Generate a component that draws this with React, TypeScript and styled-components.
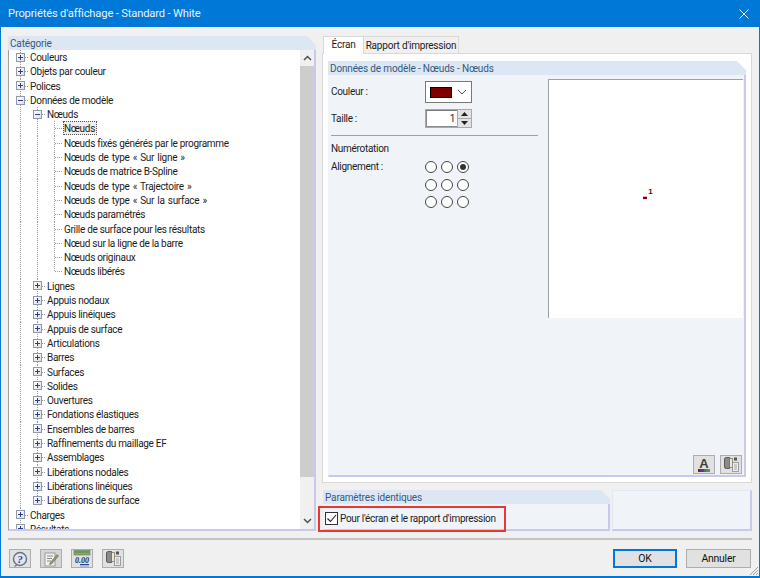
import React from "react";
import styled, { createGlobalStyle, css } from "styled-components";

const Global = createGlobalStyle`
  html, body { margin: 0; padding: 0; background: #f0f0f0; }
  #root { width: 760px; height: 578px; }
  * { box-sizing: border-box; }
`;

const FONT = `Roboto, "Noto Sans", "Liberation Sans", sans-serif`;

const Window = styled.div`
  width: 760px; height: 578px; display: flex; flex-direction: column;
  border: 1px solid #0078d7; border-top: 0; border-bottom-width: 2px;
  background: #f0f0f0; font: 10px ${FONT}; letter-spacing: -0.3px; color: #1c1c1c; overflow: hidden;
`;
const TitleBar = styled.div`
  height: 27px; flex: none; background: #0078d7; color: #e8f2fb; display: flex;
  align-items: center; justify-content: space-between; padding: 0 11px 0 8px; font-size: 11.2px; letter-spacing: -0.17px;
  margin: 0 -1px;
`;
const Main = styled.div`
  height: 504px; flex: none; padding: 9px 7px 0 7px; display: flex; gap: 6px;
`;
const LeftColumn = styled.section`
  width: 308px; display: flex; flex-direction: column;
`;
const PanelHeader = styled.div`
  height: 14px; flex: none; background: #dde6f3; color: #34597f; padding: 1px 2px 0; line-height: 13px; letter-spacing: -0.15px;
  clip-path: polygon(0 0, calc(100% - 9px) 0, 100% 9px, 100% 100%, 0 100%);
`;
const TreeFrame = styled.div`
  height: 481px; display: flex; border-left: 1px solid #a0a0a0; border-right: 2px solid #c9c9f0;
  border-bottom: 2px solid #c9c9f0; background: #fff;
`;
const Tree = styled.div`
  flex: 1; padding-left: 3px; overflow: hidden; min-width: 0;
`;
const Row = styled.div`
  height: 14.3px; display: flex; align-items: stretch; white-space: nowrap;
`;
const dotV = "repeating-linear-gradient(to bottom, #9a9a9a 0 1px, transparent 1px 2px)";
const dotH = "repeating-linear-gradient(to right, #9a9a9a 0 1px, transparent 1px 2px)";
const Cell = styled.div<{ $v: "none" | "full" | "half"; $h: boolean }>`
  width: 17px; flex: none; display: flex; align-items: center; justify-content: center;
  background-repeat: no-repeat;
  ${(p) => {
    const layers: string[] = [];
    if (p.$v === "full") layers.push(`${dotV} 8px 0 / 1px 100% no-repeat`);
    if (p.$v === "half") layers.push(`${dotV} 8px 0 / 1px 50% no-repeat`);
    if (p.$h) layers.push(`${dotH} 9px 7px / 8px 1px no-repeat`);
    return layers.length ? css`background: ${layers.join(", ")};` : "";
  }}
`;
const Expander = styled.span<{ $open: boolean }>`
  width: 9px; height: 9px; border: 1px solid #8f9aa8; display: block; margin-right: 1px;
  ${(p) => css`
    background:
      linear-gradient(#2b3f8c, #2b3f8c) center / 5px 1px no-repeat,
      ${p.$open ? "" : "linear-gradient(#2b3f8c, #2b3f8c) center / 1px 5px no-repeat,"}
      linear-gradient(135deg, #fff, #dcdfe6);
  `}
`;
const Label = styled.span<{ $selected?: boolean; $wide?: boolean }>`
  padding: 1px 1px 0; line-height: 13px; height: 14px;
  ${(p) => p.$wide && css`word-spacing: 1px;`}
  ${(p) => p.$selected && css`
    background: #eeeeee; outline: 1px dotted #555; outline-offset: -1px;
    padding: 1px 2px 0 1px;
  `}
`;
const Scrollbar = styled.div`
  width: 14px; flex: none; display: flex; flex-direction: column; background: #f0f0f0;
`;
const ScrollButton = styled.div`
  height: 16px; flex: none; display: flex; align-items: center; justify-content: center; color: #505050;
`;
const ScrollThumb = styled.div`
  height: 411px; flex: none; background: #cdcdcd;
`;
const ScrollRest = styled.div`flex: 1;`;

const RightColumn = styled.section`
  width: 430px; display: flex; flex-direction: column; position: relative;
`;
const Tabs = styled.div`
  height: 17px; flex: none; display: flex; align-items: flex-end; padding-left: 1px; position: relative; z-index: 1;
`;
const Tab = styled.div<{ $active?: boolean }>`
  display: flex; align-items: center; justify-content: center; white-space: nowrap; letter-spacing: -0.2px;
  ${(p) => p.$active ? css`
    width: 41px; height: 18px; background: #fff; border: 1px solid #d9d9d9; border-bottom: 0; margin-bottom: -1px; padding-bottom: 2px;
  ` : css`
    width: 95px; height: 17px; background: #f0f0f0; border: 1px solid #d9d9d9; border-bottom: 0; border-left: 0;
  `}
`;
const TabPage = styled.div`
  height: 430px; flex: none; background: #fff; border: 1px solid #d9d9d9; padding: 7px 5px 5px 5px;
  display: flex;
`;
const Group = styled.div`
  flex: 1; display: flex; flex-direction: column; min-width: 0;
`;
const GroupBody = styled.div`
  flex: 1; background: #f0f4f9; border-right: 2px solid #c9c9f0; border-bottom: 2px solid #c9c9f0;
  border-left: 1px solid #f0f4f9; display: flex; padding: 4px 0 0 0; min-height: 0;
`;
const Settings = styled.div`
  width: 219px; flex: none; display: flex; flex-direction: column; padding: 2px 10px 0 2px;
`;
const FieldRow = styled.div<{ $h: number; $mb?: number }>`
  display: flex; align-items: center; height: ${(p) => p.$h}px; margin-bottom: ${(p) => p.$mb ?? 0}px;
`;
const FieldLabel = styled.div`
  width: 94px; flex: none; padding-bottom: 1px;
`;
const ColorCombo = styled.div`
  width: 47px; height: 22px; background: #fff; border: 1px solid #7a7a7a; display: flex; align-items: center; padding: 0 4px;
  justify-content: space-between; border-bottom-width: 1px;
`;
const Swatch = styled.div`
  width: 22px; height: 11px; background: #800000; border: 1px solid #000;
`;
const Spinner = styled.div`
  width: 47px; height: 19px; display: flex; border: 1px solid #a8a8a8; background: #fff;
`;
const SpinValue = styled.div`
  flex: 1; text-align: right; padding-right: 2px; line-height: 16px; border: 1px solid #8a8a8a; border-right: 0; border-top-color:#777;
`;
const SpinButtons = styled.div`
  width: 14px; flex: none; display: flex; flex-direction: column; background: #e3e3e3; border-left: 1px solid #aaa;
`;
const SpinButton = styled.div`
  flex: 1; display: flex; align-items: center; justify-content: center; & + & { border-top: 1px solid #aaa; }
`;
const Rule = styled.div`
  height: 1px; background: #a0a0a0; margin: 0 0 6px 0;
`;
const Caption = styled.div`
  height: 14px; line-height: 13px; margin-bottom: 4px;
`;
const AlignBlock = styled.div`
  display: flex;
`;
const AlignLabel = styled(FieldLabel)`
  padding: 1px 0 0;
`;
const RadioGrid = styled.div`
  display: grid; grid-template-columns: repeat(3, 12px); grid-auto-rows: 12px; column-gap: 4px; row-gap: 5.5px; padding-top: 1px;
`;
const Radio = styled.span<{ $on?: boolean }>`
  width: 12px; height: 12px; border-radius: 50%; border: 1px solid #444; background: #fff;
  display: flex; align-items: center; justify-content: center;
  ${(p) => p.$on && css`
    &::after { content: ""; width: 6px; height: 6px; border-radius: 50%; background: #333; }
  `}
`;
const PreviewColumn = styled.div`
  flex: 1; display: flex; flex-direction: column; min-width: 0; padding-right: 1px;
`;
const Preview = styled.div`
  height: 239px; flex: none; background: #fff; border-left: 1px solid #a0a0a0; border-top: 1px solid #a0a0a0;
  display: flex; align-items: center; justify-content: center;
`;
const PreviewTools = styled.div`
  flex: 1; display: flex; justify-content: flex-end; align-items: flex-end; gap: 5px; padding: 0 1px 1px 0;
`;
const IconButton = styled.button<{ $disabled?: boolean }>`
  width: 22px; height: 19px; padding: 0; margin: 0; border: 1px solid #adadad; border-radius: 0;
  background: ${(p) => (p.$disabled ? "#d6d6d6" : "#e1e1e1")}; display: flex; align-items: center; justify-content: center;
`;
const BottomRow = styled.div`
  height: 41px; flex: none; margin-top: 7px; display: flex; gap: 2px;
`;
const Identical = styled.div`
  flex: 1; display: flex; flex-direction: column; position: relative; padding-left: 1px;
`;
const IdenticalBody = styled.div`
  flex: 1; background: #f0f4f9; border-right: 2px solid #c9c9f0; border-bottom: 2px solid #c9c9f0;
  display: flex; align-items: center; gap: 2px; padding: 4px 0 0 2px;
`;
const CheckBox = styled.span`
  width: 13px; height: 13px; border: 1px solid #333; background: #fff; display: flex; align-items: center; justify-content: center; flex: none;
`;
const Highlight = styled.div`
  position: absolute; left: -4px; top: 16px; width: 188px; height: 26px; border: 2px solid #e53935; pointer-events: none;
`;
const InfoBox = styled.div`
  width: 140px; flex: none; background: #f0f4f9; border: 1px solid #e4e8f6; border-right: 2px solid #c9c9f0; border-bottom: 2px solid #c9c9f0;
`;
const FooterRule = styled.div`
  height: 2px; flex: none; background: #c4c4c4; margin: 7px 7px 0 7px;
`;
const Footer = styled.footer`
  flex: 1; display: flex; align-items: flex-start; justify-content: space-between; padding: 9px 8px 0 8px; position: relative;
`;
const FooterGroup = styled.div<{ $gap: number }>`
  display: flex; gap: ${(p) => p.$gap}px;
`;
const DialogButton = styled.button<{ $primary?: boolean }>`
  width: 65px; height: 19px; margin: 0; padding: 0 0 1px; font: 10.4px ${FONT}; letter-spacing: -0.2px; color: #111; background: #e1e1e1; border-radius: 0;
  border: 1px solid #adadad;
  ${(p) => p.$primary && css`border: 2px solid #0078d7; width: 64px;`}
`;
const Grip = styled.svg`
  position: absolute; right: 0; bottom: 0;
`;

type Node = { text: string; level: number; kind: "plus" | "minus" | "leaf"; selected?: boolean };
const L0 = (text: string, kind: "plus" | "minus" = "plus"): Node => ({ text, level: 0, kind });
const L1 = (text: string, kind: "plus" | "minus" = "plus"): Node => ({ text, level: 1, kind });
const L2 = (text: string, selected = false): Node => ({ text, level: 2, kind: "leaf", selected });

const nodes: Node[] = [
  L0("Couleurs"), L0("Objets par couleur"), L0("Polices"), L0("Données de modèle", "minus"),
  L1("Nœuds", "minus"),
  L2("Nœuds", true), L2("Nœuds fixés générés par le programme"), L2("Nœuds de type « Sur ligne »"),
  L2("Nœuds de matrice B-Spline"), L2("Nœuds de type « Trajectoire »"), L2("Nœuds de type « Sur la surface »"),
  L2("Nœuds paramétrés"), L2("Grille de surface pour les résultats"), L2("Nœud sur la ligne de la barre"),
  L2("Nœuds originaux"), L2("Nœuds libérés"),
  L1("Lignes"), L1("Appuis nodaux"), L1("Appuis linéiques"), L1("Appuis de surface"), L1("Articulations"),
  L1("Barres"), L1("Surfaces"), L1("Solides"), L1("Ouvertures"), L1("Fondations élastiques"),
  L1("Ensembles de barres"), L1("Raffinements du maillage EF"), L1("Assemblages"), L1("Libérations nodales"),
  L1("Libérations linéiques"), L1("Libérations de surface"),
  L0("Charges"), L0("Résultats"),
];

function cellsFor(n: Node, i: number) {
  const cells: { v: "none" | "full" | "half"; h: boolean; exp?: "plus" | "minus" }[] = [];
  for (let l = 0; l < n.level; l++) {
    let hasSib = false;
    for (let j = i + 1; j < nodes.length; j++) {
      if (nodes[j].level < l) break;
      if (nodes[j].level === l) { hasSib = true; break; }
    }
    cells.push({ v: hasSib ? "full" : "none", h: false });
  }
  let hasNext = false;
  for (let j = i + 1; j < nodes.length; j++) {
    if (nodes[j].level < n.level) break;
    if (nodes[j].level === n.level) { hasNext = true; break; }
  }
  cells.push({ v: hasNext ? "full" : "half", h: true, exp: n.kind === "leaf" ? undefined : n.kind });
  return cells;
}

const Chevron = ({ up }: { up?: boolean }) => (
  <svg width="9" height="6" viewBox="0 0 9 6">
    <path d={up ? "M1 5 L4.5 1.5 L8 5" : "M1 1 L4.5 4.5 L8 1"} fill="none" stroke="#505050" strokeWidth="1.5" />
  </svg>
);

const HelpIcon = () => (
  <svg width="18" height="16" viewBox="0 0 18 16">
    <circle cx="9" cy="8" r="6.5" fill="#dfe6f3" stroke="#6a7180" strokeWidth="1.4" />
    <path d="M4 14 L3 16 L7 14.5Z" fill="#6a7180" />
    <text x="9" y="12" textAnchor="middle" fontFamily="Liberation Serif, serif" fontStyle="italic" fontWeight="700" fontSize="11" fill="#2b3f8c">?</text>
  </svg>
);
const EditIcon = () => (
  <svg width="16" height="16" viewBox="0 0 16 16">
    <rect x="2" y="2" width="10" height="13" fill="#f1f1f1" stroke="#9a9a9a" />
    <path d="M4 5h6M4 7.5h5M4 10h4" stroke="#8a8a8a" />
    <path d="M7 12 L14 3.5 L15.5 5 L8.5 13 L6.5 13.5Z" fill="#8e9a6a" stroke="#6a6a5a" strokeWidth=".6" />
  </svg>
);
const DecimalIcon = () => (
  <svg width="18" height="17" viewBox="0 0 18 17">
    <rect x="1" y="0.5" width="16" height="4.5" fill="#7fb069" stroke="#5a7a50" strokeWidth=".6" />
    <path d="M3 1v2M5 1v2M7 1v2M9 1v2M11 1v2M13 1v2M15 1v2" stroke="#3f5f35" strokeWidth=".6" />
    <text x="9" y="12.5" textAnchor="middle" fontFamily="Liberation Serif, serif" fontStyle="italic" fontWeight="700" fontSize="8" letterSpacing="0" fill="#1f2f5f">0.00</text>
    <path d="M7 14.5h9" stroke="#2b3f8c" />
    <path d="M7 16h9" stroke="#8a94b0" />
  </svg>
);
const CopyIcon = () => (
  <svg width="17" height="17" viewBox="0 0 17 17">
    <path d="M1.5 3 Q1.5 1.5 3.5 1.5 H6.5 V12.5 H3.5 Q1.5 12.5 1.5 11Z" fill="#8a8a8a" stroke="#444" strokeWidth=".8" />
    <path d="M6.5 2.5 H9.5 V11.5 H6.5Z" fill="#f4e6c8" stroke="#666" strokeWidth=".7" />
    <rect x="11" y="1.5" width="3" height="3" fill="#555" />
    <rect x="9.5" y="6.5" width="6" height="9" fill="#ececec" stroke="#8a8a8a" strokeWidth=".8" />
    <path d="M11 9h3M11 11h3M11 13h3" stroke="#8a8a8a" strokeWidth=".7" />
  </svg>
);
const FontIcon = () => (
  <svg width="18" height="17" viewBox="0 0 18 17">
    <text x="9" y="12" textAnchor="middle" fontFamily="Liberation Sans, sans-serif" fontWeight="700" fontSize="13" letterSpacing="0" fill="#3f3f3f">A</text>
    {["#8b1a1a", "#2a4a9a", "#7a2a9a", "#2a8a4a", "#3a8a9a", "#5a9a3a"].map((c, i) => (
      <rect key={c} x={3 + i * 2} y="13" width="2" height="3" fill={c} />
    ))}
  </svg>
);

export default function App() {
  return (
    <Window>
      <Global />
      <TitleBar>
        <span>Propriétés d'affichage - Standard - White</span>
        <svg width="10" height="10" viewBox="0 0 10 10">
          <path d="M.5 .5 L9.5 9.5 M9.5 .5 L.5 9.5" stroke="#eaf3fb" strokeWidth="1" fill="none" />
        </svg>
      </TitleBar>
      <Main>
        <LeftColumn>
          <PanelHeader>Catégorie</PanelHeader>
          <TreeFrame>
            <Tree>
              {nodes.map((n, i) => (
                <Row key={i}>
                  {cellsFor(n, i).map((c, k) => (
                    <Cell key={k} $v={c.v} $h={c.h}>
                      {c.exp && <Expander $open={c.exp === "minus"} />}
                    </Cell>
                  ))}
                  <Label $selected={n.selected} $wide={n.text.includes("«")}>{n.text}</Label>
                </Row>
              ))}
            </Tree>
            <Scrollbar>
              <ScrollButton><Chevron up /></ScrollButton>
              <ScrollThumb />
              <ScrollRest />
              <ScrollButton><Chevron /></ScrollButton>
            </Scrollbar>
          </TreeFrame>
        </LeftColumn>
        <RightColumn>
          <Tabs>
            <Tab $active>Écran</Tab>
            <Tab>Rapport d'impression</Tab>
          </Tabs>
          <TabPage>
            <Group>
              <PanelHeader>Données de modèle - Nœuds - Nœuds</PanelHeader>
              <GroupBody>
                <Settings>
                  <FieldRow $h={22} $mb={6}>
                    <FieldLabel>Couleur :</FieldLabel>
                    <ColorCombo>
                      <Swatch />
                      <svg width="10" height="6" viewBox="0 0 10 6"><path d="M1 1 L5 5 L9 1" fill="none" stroke="#555" /></svg>
                    </ColorCombo>
                  </FieldRow>
                  <FieldRow $h={19} $mb={7}>
                    <FieldLabel>Taille :</FieldLabel>
                    <Spinner>
                      <SpinValue>1</SpinValue>
                      <SpinButtons>
                        <SpinButton><svg width="7" height="4" viewBox="0 0 7 4"><path d="M3.5 0 L7 4 H0Z" fill="#222" /></svg></SpinButton>
                        <SpinButton><svg width="7" height="4" viewBox="0 0 7 4"><path d="M0 0 H7 L3.5 4Z" fill="#222" /></svg></SpinButton>
                      </SpinButtons>
                    </Spinner>
                  </FieldRow>
                  <Rule />
                  <Caption>Numérotation</Caption>
                  <AlignBlock>
                    <AlignLabel>Alignement :</AlignLabel>
                    <RadioGrid>
                      <Radio /><Radio /><Radio $on />
                      <Radio /><Radio /><Radio />
                      <Radio /><Radio /><Radio />
                    </RadioGrid>
                  </AlignBlock>
                </Settings>
                <PreviewColumn>
                  <Preview>
                    <svg width="26" height="26" viewBox="0 0 26 26">
                      <rect x="10" y="10.7" width="4" height="2.4" fill="#8b0000" />
                      <text x="17.5" y="7.5" textAnchor="middle" fontFamily="Liberation Sans, sans-serif" fontWeight="700" fontSize="8" letterSpacing="0" fill="#7a0000">1</text>
                    </svg>
                  </Preview>
                  <PreviewTools>
                    <IconButton><FontIcon /></IconButton>
                    <IconButton><CopyIcon /></IconButton>
                  </PreviewTools>
                </PreviewColumn>
              </GroupBody>
            </Group>
          </TabPage>
          <BottomRow>
            <Identical>
              <PanelHeader>Paramètres identiques</PanelHeader>
              <IdenticalBody>
                <CheckBox>
                  <svg width="11" height="11" viewBox="0 0 11 11"><path d="M1.5 5.5 L4.5 8.5 L10 2" fill="none" stroke="#222" strokeWidth="1.1" /></svg>
                </CheckBox>
                <span>Pour l'écran et le rapport d'impression</span>
              </IdenticalBody>
              <Highlight />
            </Identical>
            <InfoBox />
          </BottomRow>
        </RightColumn>
      </Main>
      <FooterRule />
      <Footer>
        <FooterGroup $gap={9}>
          <IconButton><HelpIcon /></IconButton>
          <IconButton $disabled><EditIcon /></IconButton>
          <IconButton><DecimalIcon /></IconButton>
          <IconButton><CopyIcon /></IconButton>
        </FooterGroup>
        <FooterGroup $gap={9}>
          <DialogButton $primary>OK</DialogButton>
          <DialogButton>Annuler</DialogButton>
        </FooterGroup>
        <Grip width="11" height="11" viewBox="0 0 11 11">
          <path d="M10 2 L2 10 M10 5 L5 10 M10 8 L8 10" stroke="#a0a0a0" strokeWidth="1" />
        </Grip>
      </Footer>
    </Window>
  );
}
